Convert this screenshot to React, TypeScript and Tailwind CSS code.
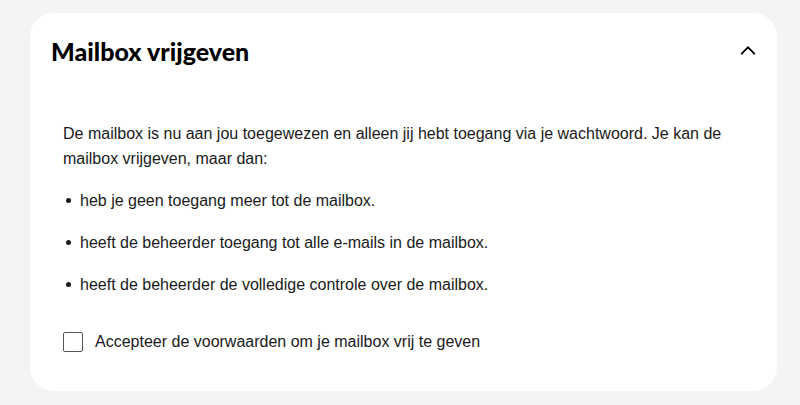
export default function App() {
  return (
    <div className="min-h-[405px] bg-[#f4f4f4] px-[30px] pt-[13px]" style={{ fontFamily: '"Liberation Sans", Arial, sans-serif' }}>
      <section className="h-[378px] w-[747px] rounded-[24px] bg-white">
        <header className="flex items-center justify-between pl-[21px] pr-[17px] pt-[24px]">
          <h2 className="font-['Lato',sans-serif] text-[25px] font-black leading-[28px] text-black">Mailbox vrijgeven</h2>
          <button aria-label="Inklappen" className="flex h-6 w-6 items-center justify-center text-black">
            <svg width="22" height="22" viewBox="0 0 24 24" fill="none" stroke="currentColor" strokeWidth="1.9">
              <path d="M4.5 15.5l7.5-7.5 7.5 7.5" />
            </svg>
          </button>
        </header>
        <div className="px-[33px] pt-[56px] text-[16px] leading-[25px] text-[#1a1a1a]">
          <p>
            De mailbox is nu aan jou toegewezen en alleen jij hebt toegang via je wachtwoord. Je kan de mailbox
            vrijgeven, maar dan:
          </p>
          <ul className="mt-[17px] flex flex-col gap-[17px]">
            {[
              "heb je geen toegang meer tot de mailbox.",
              "heeft de beheerder toegang tot alle e-mails in de mailbox.",
              "heeft de beheerder de volledige controle over de mailbox.",
            ].map((t) => (
              <li key={t} className="flex items-center gap-[9px] pl-[3px]">
                <span className="h-[5px] w-[5px] rounded-full bg-[#1a1a1a]" />
                {t}
              </li>
            ))}
          </ul>
          <label className="mt-[32px] flex items-center gap-[12px]">
            <input type="checkbox" className="h-[20px] w-[20px] appearance-none rounded-[2px] border border-[#555] bg-white" />
            Accepteer de voorwaarden om je mailbox vrij te geven
          </label>
        </div>
      </section>
    </div>
  );
}
